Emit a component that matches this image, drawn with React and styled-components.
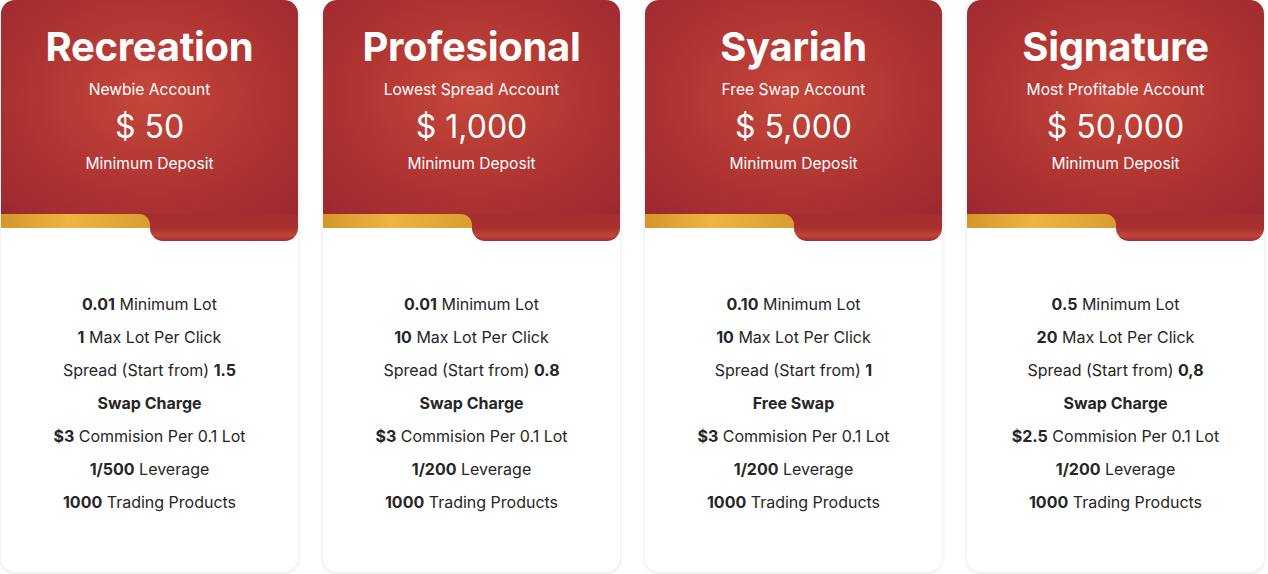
import React from 'react';
import styled, { createGlobalStyle } from 'styled-components';

const GlobalStyle = createGlobalStyle`
  body {
    margin: 0;
    background: #ffffff;
    font-family: Inter, "Noto Sans", "Liberation Sans", sans-serif;
  }
`;

const RED = 'radial-gradient(ellipse 70% 75% at 50% 45%, #c5473b 0%, #b03532 55%, #9d2930 100%)';

const Row = styled.div`
  display: flex;
  gap: 25px;
  padding-left: 1px;
  height: 574px;
`;

const Card = styled.div`
  width: 297px;
  height: 572px;
  display: flex;
  flex-direction: column;
  background: #ffffff;
  border-radius: 14px;
  box-shadow: 0 1px 4px rgba(0, 0, 0, 0.12);
  overflow: hidden;
`;

const Header = styled.div`
  height: 214px;
  background: ${RED};
  display: flex;
  flex-direction: column;
  align-items: center;
  color: #ffffff;
`;

const Title = styled.h2`
  margin: 22px 0 0;
  font-size: 40px;
  font-weight: 700;
  line-height: 50px;
  letter-spacing: -0.3px;
`;

const Sub = styled.div`
  margin-top: ${p => p.$mt || 0}px;
  font-size: 15.6px;
  line-height: 20px;
`;

const Price = styled.div`
  margin-top: 7px;
  font-size: 32px;
  line-height: 40px;
`;

const Ribbon = styled.div`
  display: flex;
  height: 27px;
  background: linear-gradient(to bottom, #a42d2f 0, #a42d2f 14px, transparent 14px);
`;

const Gold = styled.div`
  width: 149px;
  height: 14px;
  border-top-right-radius: 11px;
  background: linear-gradient(to right, #d6962a 0%, #efb442 45%, #db9c30 100%);
`;

const Tab = styled.div`
  flex: 1;
  height: 27px;
  border-radius: 0 0 13px 13px;
  background: linear-gradient(to bottom, #a42d2f 0%, #a8302f 50%, #c14438 80%, #a12c2e 100%);
`;

const List = styled.ul`
  list-style: none;
  margin: 53px 0 0;
  padding: 0;
  display: flex;
  flex-direction: column;
  align-items: center;
  gap: 13px;
  color: #262626;
  font-size: 16px;
  line-height: 20px;
`;

const plans = [
  {
    title: 'Recreation', sub: 'Newbie Account', price: '$ 50',
    rows: [['0.01', ' Minimum Lot'], ['1', ' Max Lot Per Click'], ['', 'Spread (Start from) ', '1.5'], ['Swap Charge'], ['$3', ' Commision Per 0.1 Lot'], ['1/500', ' Leverage'], ['1000', ' Trading Products']],
  },
  {
    title: 'Profesional', sub: 'Lowest Spread Account', price: '$ 1,000',
    rows: [['0.01', ' Minimum Lot'], ['10', ' Max Lot Per Click'], ['', 'Spread (Start from) ', '0.8'], ['Swap Charge'], ['$3', ' Commision Per 0.1 Lot'], ['1/200', ' Leverage'], ['1000', ' Trading Products']],
  },
  {
    title: 'Syariah', sub: 'Free Swap Account', price: '$ 5,000',
    rows: [['0.10', ' Minimum Lot'], ['10', ' Max Lot Per Click'], ['', 'Spread (Start from) ', '1'], ['Free Swap'], ['$3', ' Commision Per 0.1 Lot'], ['1/200', ' Leverage'], ['1000', ' Trading Products']],
  },
  {
    title: 'Signature', sub: 'Most Profitable Account', price: '$ 50,000',
    rows: [['0.5', ' Minimum Lot'], ['20', ' Max Lot Per Click'], ['', 'Spread (Start from) ', '0,8'], ['Swap Charge'], ['$2.5', ' Commision Per 0.1 Lot'], ['1/200', ' Leverage'], ['1000', ' Trading Products']],
  },
];

const Line = ({ parts }) => (
  <li>
    {parts[0] && <b>{parts[0]}</b>}
    {parts[1]}
    {parts[2] && <b>{parts[2]}</b>}
  </li>
);

export default function App() {
  return (
    <>
      <GlobalStyle />
      <Row>
        {plans.map(p => (
          <Card key={p.title}>
            <Header>
              <Title>{p.title}</Title>
              <Sub $mt={8}>{p.sub}</Sub>
              <Price>{p.price}</Price>
              <Sub $mt={7}>Minimum Deposit</Sub>
            </Header>
            <Ribbon>
              <Gold />
              <Tab />
            </Ribbon>
            <List>
              {p.rows.map((r, i) => <Line key={i} parts={r} />)}
            </List>
          </Card>
        ))}
      </Row>
    </>
  );
}
